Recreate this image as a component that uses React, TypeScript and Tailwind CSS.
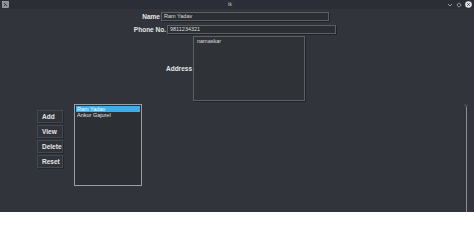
const font = "font-['Liberation_Sans',sans-serif]";

const Entry = ({ value, width }: { value: string; width: string }) => (
  <div
    className={`${width} h-[9px] border border-[#5c6065] bg-[#2b2f34] pl-[2px] text-[5.5px] leading-[7px] text-[#dcdcdc] shadow-[1px_1px_0_#1f2226]`}
  >
    {value}
  </div>
);

const SideButton = ({ label }: { label: string }) => (
  <div className="w-[26px] h-[13px] border border-[#44484d] bg-[#30343a] pl-[4px] text-[6.5px] font-bold leading-[11px] text-[#e6e6e6] shadow-[1px_1px_0_#25282c]">
    {label}
  </div>
);

export default function App() {
  return (
    <div className={`${font} w-[474px] h-[212px] overflow-hidden bg-[#31353b] flex flex-col`}>
      {/* title bar */}
      <div className="h-[9px] bg-[#2b2e36] flex items-center px-[2px]">
        <svg width="7" height="7" viewBox="0 0 7 7">
          <rect x="0.5" y="0.5" width="6" height="6" fill="#8a8d92" stroke="#b8bbbf" strokeWidth="0.6" />
          <path d="M2 2 L5 5 M2 5 L3.5 3.5" stroke="#2b2e36" strokeWidth="0.8" />
        </svg>
        <span className="flex-1 text-center text-[5px] leading-[9px] text-[#c8c8c8] pl-[4px]">tk</span>
        <div className="flex items-center gap-[3px]">
          <svg width="6" height="6" viewBox="0 0 6 6">
            <path d="M1 2 L3 4 L5 2" fill="none" stroke="#b0b3b8" strokeWidth="0.8" />
          </svg>
          <svg width="6" height="6" viewBox="0 0 6 6">
            <path d="M3 0.8 L5.2 3 L3 5.2 L0.8 3 Z" fill="none" stroke="#b0b3b8" strokeWidth="0.8" />
          </svg>
          <svg width="7" height="7" viewBox="0 0 7 7">
            <circle cx="3.5" cy="3.5" r="3.3" fill="#e8e8e8" />
            <path d="M2.2 2.2 L4.8 4.8 M4.8 2.2 L2.2 4.8" stroke="#2b2e36" strokeWidth="0.8" />
          </svg>
        </div>
      </div>

      {/* name */}
      <div className="mt-[3px] ml-[128px] flex items-center">
        <span className="w-[33px] pr-[1px] text-right text-[6.5px] font-bold leading-[9px] text-[#e6e6e6]">Name</span>
        <Entry value="Ram Yadav" width="w-[168px]" />
      </div>

      {/* phone */}
      <div className="mt-[4px] ml-[128px] flex items-center">
        <span className="w-[39px] pr-[1px] text-right text-[6.5px] font-bold leading-[9px] text-[#e6e6e6] whitespace-nowrap">
          Phone No.
        </span>
        <Entry value="9811234321" width="w-[169px]" />
      </div>

      {/* address */}
      <div className="mt-[2px] ml-[160px] flex items-center">
        <span className="w-[33px] pr-[1px] text-right text-[6.5px] font-bold text-[#e6e6e6]">Address</span>
        <div className="w-[112px] h-[65px] border border-[#5c6065] bg-[#2f3338] pl-[3px] pt-[1px] text-[5.5px] leading-[7px] text-[#dcdcdc] shadow-[1px_1px_0_#1f2226]">
          namaskar
        </div>
      </div>

      {/* bottom */}
      <div className="mt-[3px] flex">
        <div className="ml-[37px] mt-[6px] flex flex-col gap-[2px]">
          <SideButton label="Add" />
          <SideButton label="View" />
          <SideButton label="Delete" />
          <SideButton label="Reset" />
        </div>
        <div className="ml-[11px] w-[68px] h-[82px] border border-[#9a9ea4] bg-[#2c3035] p-[1px] text-[5.5px] leading-[6px] text-[#e0e0e0]">
          <div className="bg-[#3daee9] px-[1px] text-white">Ram Yadav</div>
          <div className="px-[1px]">Ankur Gajurel</div>
        </div>
        <div className="ml-auto mr-[6px] flex flex-col items-center">
          <svg width="4" height="3" viewBox="0 0 4 3">
            <path d="M0.5 0.5 L2 2.5 L3.5 0.5" fill="none" stroke="#7a7e84" strokeWidth="0.6" />
          </svg>
          <div className="w-px h-[106px] bg-[#8c9096]" />
        </div>
      </div>
    </div>
  );
}
